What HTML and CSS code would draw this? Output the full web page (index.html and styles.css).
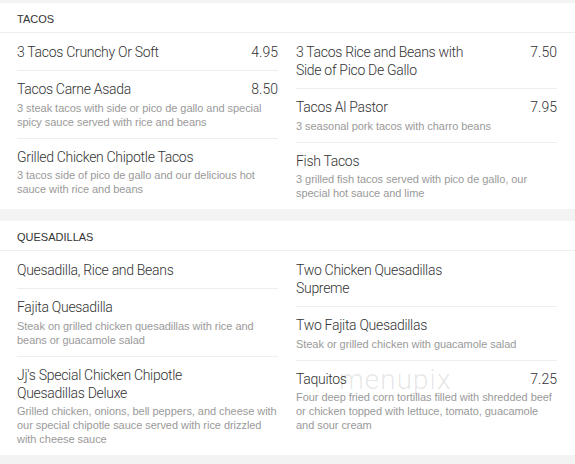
FILE: index.html
```html
<!DOCTYPE html>
<html>
<head>
<meta charset="utf-8">
<link rel="stylesheet" href="styles.css">
</head>
<body>
<section class="card">
  <h2 class="card-title">Tacos</h2>
  <div class="cols">
    <div class="col">
      <div class="item">
        <div class="item-head"><span class="name">3 Tacos Crunchy Or Soft</span><span class="price">4.95</span></div>
      </div>
      <div class="item">
        <div class="item-head"><span class="name">Tacos Carne Asada</span><span class="price">8.50</span></div>
        <p class="desc">3 steak tacos with side or pico de gallo and special spicy sauce served with rice and beans</p>
      </div>
      <div class="item">
        <div class="item-head"><span class="name">Grilled Chicken Chipotle Tacos</span></div>
        <p class="desc">3 tacos side of pico de gallo and our delicious hot sauce with rice and beans</p>
      </div>
    </div>
    <div class="col">
      <div class="item">
        <div class="item-head"><span class="name">3 Tacos Rice and Beans with Side of Pico De Gallo</span><span class="price">7.50</span></div>
      </div>
      <div class="item">
        <div class="item-head"><span class="name">Tacos Al Pastor</span><span class="price">7.95</span></div>
        <p class="desc">3 seasonal pork tacos with charro beans</p>
      </div>
      <div class="item">
        <div class="item-head"><span class="name">Fish Tacos</span></div>
        <p class="desc">3 grilled fish tacos served with pico de gallo, our special hot sauce and lime</p>
      </div>
    </div>
  </div>
</section>
<section class="card">
  <h2 class="card-title">Quesadillas</h2>
  <div class="cols">
    <div class="col">
      <div class="item">
        <div class="item-head"><span class="name">Quesadilla, Rice and Beans</span></div>
      </div>
      <div class="item">
        <div class="item-head"><span class="name">Fajita Quesadilla</span></div>
        <p class="desc">Steak on grilled chicken quesadillas with rice and beans or guacamole salad</p>
      </div>
      <div class="item">
        <div class="item-head"><span class="name">Jj's Special Chicken Chipotle Quesadillas Deluxe</span></div>
        <p class="desc">Grilled chicken, onions, bell peppers, and cheese with our special chipotle sauce served with rice drizzled with cheese sauce</p>
      </div>
    </div>
    <div class="col">
      <div class="item">
        <div class="item-head"><span class="name">Two Chicken Quesadillas Supreme</span></div>
      </div>
      <div class="item">
        <div class="item-head"><span class="name">Two Fajita Quesadillas</span></div>
        <p class="desc">Steak or grilled chicken with guacamole salad</p>
      </div>
      <div class="item item-wm">
        <div class="item-head"><span class="name">Taquitos</span><span class="price">7.25</span></div>
        <p class="desc">Four deep fried corn tortillas filled with shredded beef or chicken topped with lettuce, tomato, guacamole and sour cream</p>
        <span class="watermark">menupix</span>
      </div>
    </div>
  </div>
</section>
</body>
</html>
```
FILE: styles.css
```css
* { box-sizing: border-box; }
html, body { margin: 0; padding: 0; }
body {
  background: #f3f3f3;
  padding-top: 3px;
  font-family: Roboto, "Liberation Sans", Arial, sans-serif;
  width: 575px;
}
.card {
  background: #fff;
  margin-bottom: 12px;
}
.card-title {
  margin: 0;
  height: 30px;
  line-height: 32px;
  padding: 0 17px;
  font-size: 11px;
  font-weight: 400;
  text-transform: uppercase;
  color: #333;
  font-family: "Liberation Sans", Arial, sans-serif;
  border-bottom: 1px solid #eee;
}
.cols {
  display: grid;
  grid-template-columns: 261px 261px;
  column-gap: 18px;
  padding: 1px 18px 0 17px;
}
.col { display: flex; flex-direction: column; }
.item {
  padding: 9px 0 9px;
  border-bottom: 1px solid #eee;
}
.item:last-child { border-bottom: none; padding-bottom: 9px; }
.item-head {
  display: flex;
  justify-content: space-between;
  align-items: flex-start;
  gap: 20px;
}
.name, .price {
  font-size: 14px;
  line-height: 18px;
  font-weight: 300;
  letter-spacing: -0.3px;
  color: #333;
}
.name { max-width: 190px; }
.price { flex: none; letter-spacing: 0; }
.desc {
  margin: 2.5px 0 0;
  font-size: 11px;
  line-height: 14px;
  color: #9a9a9a;
  letter-spacing: -0.05px;
  font-family: "Liberation Sans", Arial, sans-serif;
}
.item-wm { position: relative; }
.watermark {
  position: absolute;
  left: 43px;
  top: 2px;
  font-size: 28px;
  font-weight: 300;
  letter-spacing: 1px;
  color: rgba(0, 0, 0, 0.11);
  font-family: Roboto, sans-serif;
}
```
